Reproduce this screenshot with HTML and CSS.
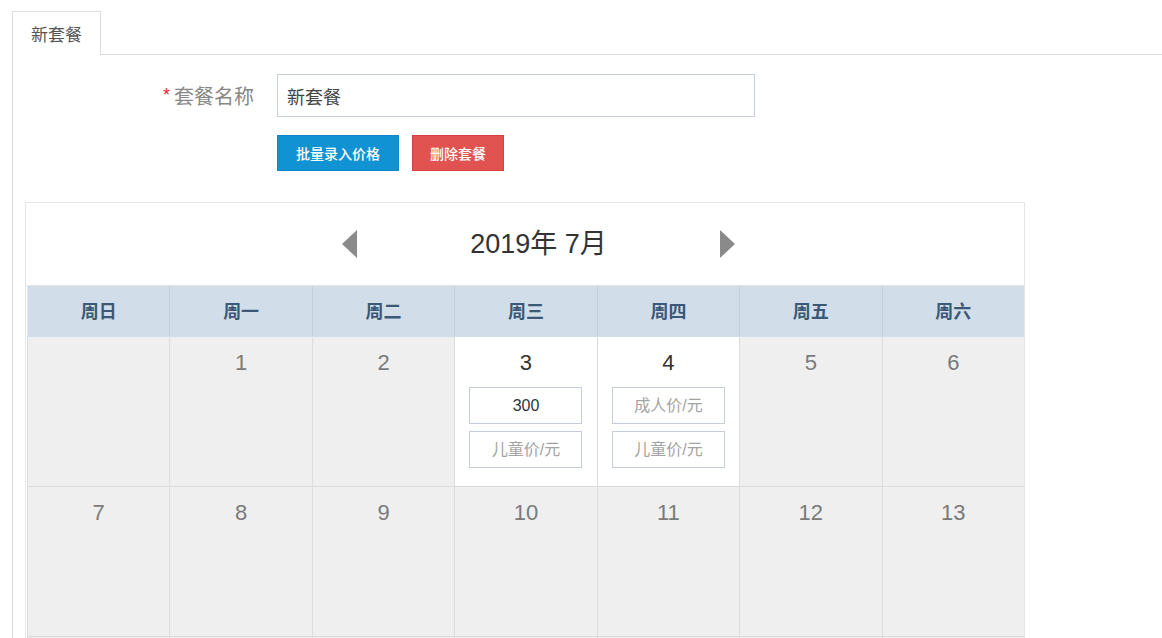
FILE: index.html
```html
<!DOCTYPE html>
<html lang="zh-CN">
<head>
<meta charset="utf-8">
<title>套餐价格</title>
<link rel="stylesheet" href="styles.css">
</head>
<body>
<div class="page">
  <div class="tabs">
    <div class="tab active">新套餐</div>
  </div>
  <div class="panel">
    <div class="form-row">
      <label class="form-label"><span class="req">*</span>套餐名称</label>
      <input class="text-input" type="text" value="新套餐">
    </div>
    <div class="form-actions">
      <button class="btn btn-blue" type="button">批量录入价格</button>
      <button class="btn btn-red" type="button">删除套餐</button>
    </div>

    <div class="calendar">
      <div class="cal-head">
        <span class="arrow arrow-left"></span>
        <span class="cal-title">2019年 7月</span>
        <span class="arrow arrow-right"></span>
      </div>
      <div class="cal-grid">
        <div class="wk">周日</div>
        <div class="wk">周一</div>
        <div class="wk">周二</div>
        <div class="wk">周三</div>
        <div class="wk">周四</div>
        <div class="wk">周五</div>
        <div class="wk">周六</div>

        <div class="day"></div>
        <div class="day"><span class="num">1</span></div>
        <div class="day"><span class="num">2</span></div>
        <div class="day open"><span class="num">3</span>
          <input class="price" type="text" value="300" placeholder="成人价/元">
          <input class="price" type="text" placeholder="儿童价/元">
        </div>
        <div class="day open"><span class="num">4</span>
          <input class="price" type="text" placeholder="成人价/元">
          <input class="price" type="text" placeholder="儿童价/元">
        </div>
        <div class="day"><span class="num">5</span></div>
        <div class="day"><span class="num">6</span></div>

        <div class="day"><span class="num">7</span></div>
        <div class="day"><span class="num">8</span></div>
        <div class="day"><span class="num">9</span></div>
        <div class="day"><span class="num">10</span></div>
        <div class="day"><span class="num">11</span></div>
        <div class="day"><span class="num">12</span></div>
        <div class="day"><span class="num">13</span></div>

        <div class="day"></div>
        <div class="day"></div>
        <div class="day"></div>
        <div class="day"></div>
        <div class="day"></div>
        <div class="day"></div>
        <div class="day"></div>
      </div>
    </div>
  </div>
</div>
</body>
</html>
```

FILE: styles.css
```css
html {
  overflow: hidden;
}

body {
  margin: 0;
  background: #fff;
  font-family: "Liberation Sans", "Noto Sans CJK SC", sans-serif;
  color: #333;
}

.page {
  padding: 11px 0 0 12px;
}

/* tab strip */
.tabs {
  display: flex;
  height: 43px;
  border-bottom: 1px solid #ddd;
}

.tab {
  width: 89px;
  box-sizing: border-box;
  border: 1px solid #ddd;
  border-bottom: none;
  background: #fff;
  margin-bottom: -1px;
  height: 44px;
  display: flex;
  align-items: center;
  justify-content: center;
  font-size: 17px;
  color: #555;
}

.panel {
  border-left: 1px solid #ddd;
  padding: 19px 0 0 12px;
  min-height: 700px;
}

/* package name row */
.form-row {
  display: flex;
  align-items: center;
}

.form-label {
  width: 229px;
  margin-right: 23px;
  text-align: right;
  font-size: 20px;
  color: #888;
}

.req {
  color: #e8262b;
  font-size: 18px;
  margin-right: 4px;
  position: relative;
  top: -3px;
}

.text-input {
  width: 478px;
  height: 43px;
  box-sizing: border-box;
  border: 1px solid #c7ceda;
  padding: 0 9px;
  font-family: inherit;
  font-size: 18px;
  color: #444;
  outline: none;
}

.form-actions {
  display: flex;
  gap: 13px;
  margin: 18px 0 0 252px;
}

.btn {
  height: 36px;
  border: 1px solid transparent;
  font-family: inherit;
  font-size: 14px;
  font-weight: 500;
  color: #fff;
  padding: 0 12px;
  cursor: pointer;
}

.btn-blue {
  width: 122px;
  background: #1192d3;
  border-color: #0f87c6;
}

.btn-red {
  width: 92px;
  background: #e05350;
  border-color: #d6403d;
}

/* month calendar */
.calendar {
  width: 1000px;
  box-sizing: border-box;
  margin-top: 31px;
  border: 1px solid #e6e6e6;
  padding-left: 1px;
}

.cal-head {
  height: 82px;
  display: flex;
  align-items: center;
  justify-content: center;
  padding-left: 27px;
  border-bottom: 1px solid #e3e3e3;
  margin-left: -1px;
}

.cal-title {
  font-size: 27px;
  line-height: 32px;
  color: #333;
  margin: 0 113px 1px;
}

.arrow {
  width: 0;
  height: 0;
  border-top: 14px solid transparent;
  border-bottom: 14px solid transparent;
}

.arrow-left {
  border-right: 15px solid #8a8a8a;
}

.arrow-right {
  border-left: 15px solid #8a8a8a;
}

.cal-grid {
  display: grid;
  grid-template-columns: repeat(7, 1fr);
}

.wk {
  height: 50px;
  background: #d1dee9;
  border-left: 1px solid #c3d1dd;
  display: flex;
  align-items: center;
  justify-content: center;
  padding-bottom: 3px;
  box-sizing: border-box;
  font-size: 18px;
  font-weight: bold;
  color: #3b5876;
}

.wk:first-child {
  border-left-color: #e0e8ef;
}

.day {
  height: 150px;
  box-sizing: border-box;
  background: #efefef;
  border-left: 1px solid #dcdcdc;
  border-top: 1px solid #dcdcdc;
  display: flex;
  flex-direction: column;
  align-items: center;
  padding-top: 13px;
}

.day:nth-child(-n+14) {
  border-top-color: #d1dee9;
}

.day.open {
  background: #fff;
}

.num {
  font-size: 22px;
  line-height: 26px;
  color: #7a7a7a;
}

.open .num {
  color: #333;
}

.price {
  width: 113px;
  height: 37px;
  box-sizing: border-box;
  border: 1px solid #c5ccd8;
  margin-top: 7px;
  text-align: center;
  font-family: inherit;
  font-size: 16px;
  color: #333;
  outline: none;
  background: #fff;
}

.num + .price {
  margin-top: 11px;
}

.price::placeholder {
  color: #a3a3a3;
}
```
